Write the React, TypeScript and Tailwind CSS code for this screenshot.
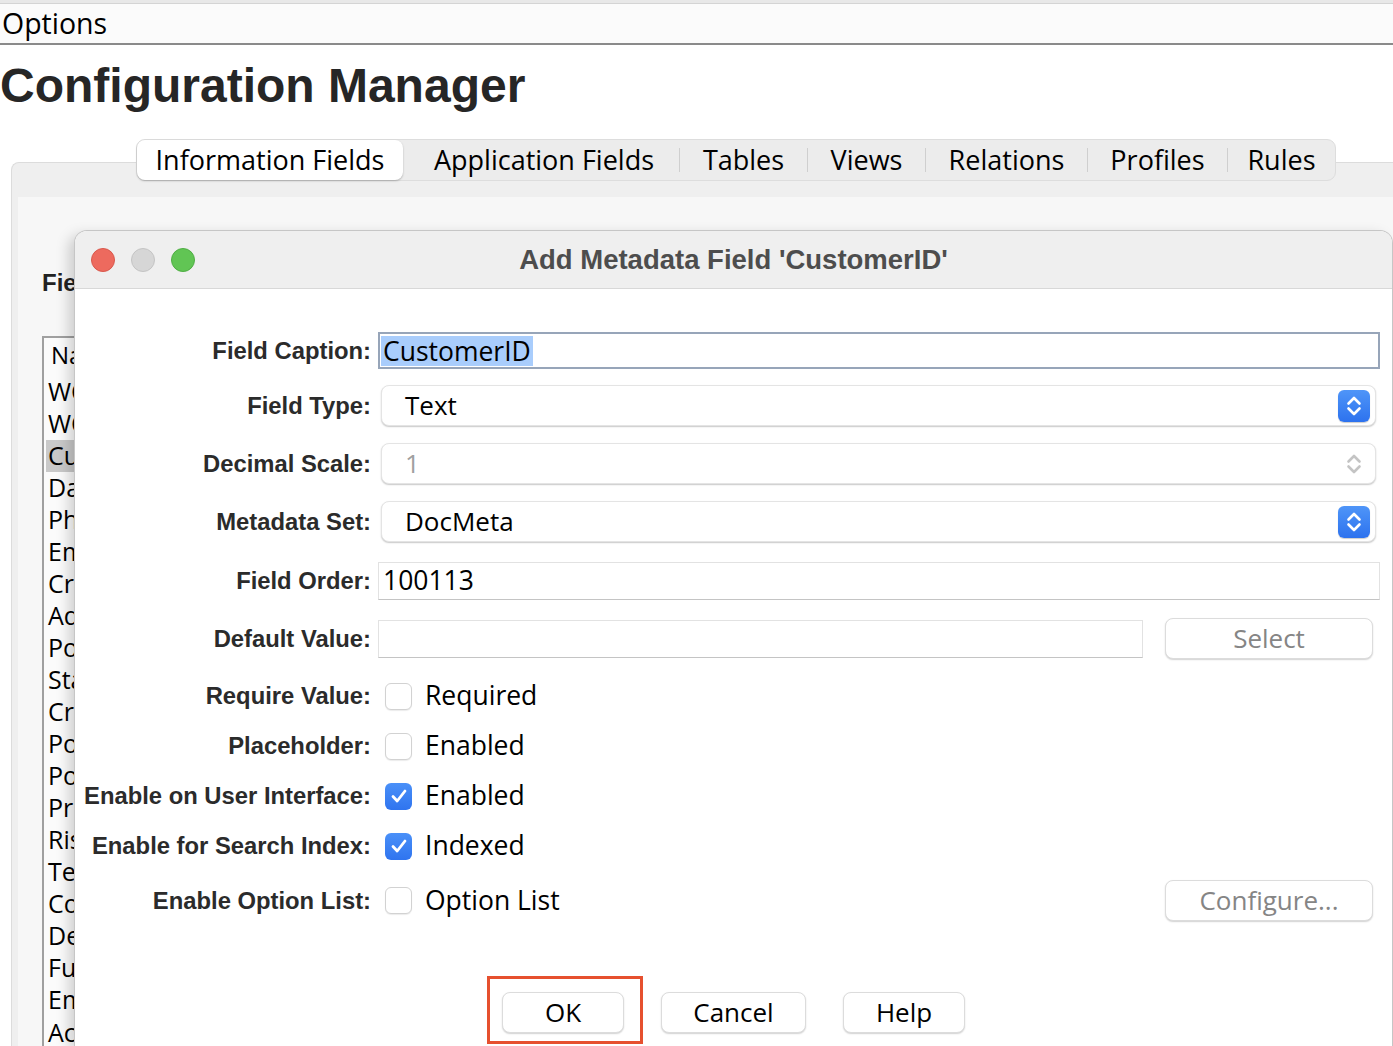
import { ReactNode } from 'react'

const ui = "font-['Open_Sans',sans-serif]"
const helv = "font-['Liberation_Sans',Arial,sans-serif]"

const tabs = [
  { name: 'Information Fields', w: 'w-[266px]' },
  { name: 'Application Fields', w: 'w-[276px]' },
  { name: 'Tables', w: 'w-[127px]' },
  { name: 'Views', w: 'w-[117px]' },
  { name: 'Relations', w: 'w-[161px]' },
  { name: 'Profiles', w: 'w-[139px]' },
  { name: 'Rules', w: 'w-[107px]' },
]

// only the left edge of the list peeks out from behind the dialog
const listItems = ['WC', 'WC', 'Cu', 'Da', 'Ph', 'Em', 'Cr', 'Ad', 'Po', 'Sta', 'Cr', 'Po', 'Po', 'Pr', 'Ris', 'Te', 'Co', 'De', 'Fu', 'Em']

function Stepper({ disabled }: { disabled?: boolean }) {
  if (disabled) {
    return (
      <svg width="32" height="32" viewBox="0 0 32 32" className="mr-[5px]">
        <path d="M10.5 13.5 16 8l5.5 5.5M10.5 18.5 16 24l5.5-5.5" fill="none" stroke="#c4c4c4" strokeWidth="2.6" strokeLinecap="round" strokeLinejoin="round" />
      </svg>
    )
  }
  return (
    <div className="mr-[5px] flex h-[32px] w-[32px] items-center justify-center rounded-[6px] bg-gradient-to-b from-[#4f95f8] to-[#2d72ee] shadow-[0_1px_1px_rgba(0,0,0,0.2)]">
      <svg width="32" height="32" viewBox="0 0 32 32">
        <path d="M10.5 13.5 16 8l5.5 5.5M10.5 18.5 16 24l5.5-5.5" fill="none" stroke="#fff" strokeWidth="2.6" strokeLinecap="round" strokeLinejoin="round" />
      </svg>
    </div>
  )
}

function Select({ value, disabled }: { value: string; disabled?: boolean }) {
  return (
    <div className="ml-[3px] mr-[4px] flex h-full flex-1 items-center justify-between rounded-[8px] border border-[#e4e4e4] bg-white shadow-[0_1px_1.5px_rgba(0,0,0,0.22)]">
      <span className={`${ui} pl-[23px] text-[26px] ${disabled ? 'text-[#a0a0a0]' : 'text-black'}`}>{value}</span>
      <Stepper disabled={disabled} />
    </div>
  )
}

function Checkbox({ checked, label }: { checked?: boolean; label: string }) {
  return (
    <div className="ml-[7px] flex items-center gap-[13px]">
      {checked ? (
        <div className="flex h-[27px] w-[27px] items-center justify-center rounded-[6px] bg-gradient-to-b from-[#4a90f8] to-[#2f74ef]">
          <svg width="20" height="20" viewBox="0 0 20 20">
            <path d="M4 10.5 8.2 15 16 5" fill="none" stroke="#fff" strokeWidth="2.8" strokeLinecap="round" strokeLinejoin="round" />
          </svg>
        </div>
      ) : (
        <div className="h-[27px] w-[27px] rounded-[6px] border border-[#d2d2d2] bg-white shadow-[0_1px_1px_rgba(0,0,0,0.08)]" />
      )}
      <span className={`${ui} text-[26.5px] text-black`}>{label}</span>
    </div>
  )
}

function Row({ label, className, children }: { label: string; className: string; children: ReactNode }) {
  return (
    <div className={`flex items-center ${className}`}>
      <div className={`${helv} w-[296px] shrink-0 text-right text-[23.8px] font-bold text-[#2b2b2b]`}>{label}</div>
      <div className="flex h-full flex-1 items-center pl-[7px] pr-[12px]">{children}</div>
    </div>
  )
}

function MacButton({ children, muted, className = '' }: { children: ReactNode; muted?: boolean; className?: string }) {
  return (
    <div
      className={`${ui} relative flex h-[41px] items-center justify-center rounded-[8px] border border-[#dcdcdc] bg-white text-[26px] shadow-[0_1px_1.5px_rgba(0,0,0,0.18)] ${muted ? 'text-[#858585]' : 'text-black'} ${className}`}
    >
      {children}
    </div>
  )
}

export default function App() {
  return (
    <div className="relative h-[1046px] w-[1393px] overflow-hidden bg-white">
      <div className="h-[4px] border-b border-[#d4d4d4] bg-[#e8e8e8]" />
      <div className={`${ui} flex h-[41px] items-center border-b-2 border-[#8a8a8a] bg-[#fbfbfb] pl-[2px] text-[28.5px] leading-none text-black`}>
        Options
      </div>
      <h1 className={`${helv} mt-[17px] text-[48px] font-bold leading-[48px] text-[#262626]`}>Configuration Manager</h1>

      <div className="relative z-10 ml-[136px] mt-[29px] flex h-[42px] w-fit items-center rounded-[9px] border border-[#dddddd] bg-[#ececec]">
        {tabs.map((t, i) => (
          <div key={t.name} className="flex items-center">
            {i > 1 && <div className="h-[24px] w-px bg-[#cfcfcf]" />}
            <div
              className={`${ui} flex h-[40px] items-center justify-center text-[27px] text-black ${t.w} ${
                i === 0 ? 'rounded-[8px] bg-white text-[#1a1a1a] shadow-[0_1px_2px_rgba(0,0,0,0.25)]' : ''
              } ${i === 1 ? 'pl-[6px]' : ''}`}
            >
              {t.name}
            </div>
          </div>
        ))}
      </div>

      <div className="-mt-[19px] ml-[11px] h-[900px] rounded-tl-[8px] border-l border-t border-[#dcdcdc] bg-[#efefef] pl-[6px] pt-[34px]">
        <div className="h-full bg-[#f7f7f7] pl-[24px] pt-[72px]">
          <div className={`${helv} text-[24px] font-bold leading-[28px] text-[#222]`}>Fie</div>
          <div className="mt-[39px] h-[800px] w-[34px] overflow-hidden border-l-2 border-t-2 border-[#a0a0a0] bg-[#fbfbfb]">
            <div className={`${ui} flex h-[33px] items-center pl-[7px] text-[24px]`}>Na</div>
            <div className="pt-[5px]">
              {listItems.map((n, i) => (
                <div
                  key={i}
                  className={`${ui} ml-[2px] flex h-[32px] items-center pl-[2px] text-[25px] text-black ${i === 2 ? 'bg-[#c9c9c9]' : ''}`}
                >
                  {n}
                </div>
              ))}
              <div className={`${ui} ml-[2px] pl-[2px] text-[25px] leading-[32px] text-black`}>Ac</div>
            </div>
          </div>
        </div>
      </div>

      <div className="absolute bottom-0 left-[75px] right-px top-[231px] overflow-hidden rounded-t-[12px] bg-white shadow-[0_0_0_1px_#c6c6c6,-6px_4px_14px_rgba(0,0,0,0.18)]">
        <div className="grid h-[58px] grid-cols-[1fr_auto_1fr] items-center border-b border-[#d8d8d8] bg-[#efefef]">
          <div className="flex gap-[16px] pl-[16px]">
            <div className="h-[24px] w-[24px] rounded-full border border-[#d9584c] bg-[#ed6a5e]" />
            <div className="h-[24px] w-[24px] rounded-full border border-[#c4c4c4] bg-[#d6d6d6]" />
            <div className="h-[24px] w-[24px] rounded-full border border-[#4fae44] bg-[#61c554]" />
          </div>
          <div className={`${helv} text-[27.5px] font-bold text-[#4d4d4d]`}>Add Metadata Field 'CustomerID'</div>
          <div />
        </div>

        <div className="flex flex-col">
          <Row label="Field Caption:" className="mt-[43px] h-[37px]">
            <div className="flex h-full flex-1 items-center border-2 border-[#97a5b9] bg-white pl-px">
              <span className={`${ui} bg-[#a9cdfc] px-[2px] text-[26.5px] leading-[30px] text-black`}>CustomerID</span>
            </div>
          </Row>
          <Row label="Field Type:" className="mt-[16px] h-[41px]">
            <Select value="Text" />
          </Row>
          <Row label="Decimal Scale:" className="mt-[17px] h-[41px]">
            <Select value="1" disabled />
          </Row>
          <Row label="Metadata Set:" className="mt-[17px] h-[41px]">
            <Select value="DocMeta" />
          </Row>
          <Row label="Field Order:" className="mt-[20px] h-[38px]">
            <div className="flex h-full flex-1 items-center border border-[#e2e2e2] border-b-[#c4c4c4] bg-white pl-[4px]">
              <span className={`${ui} text-[26.5px] text-black`}>100113</span>
            </div>
          </Row>
          <Row label="Default Value:" className="mt-[18px] h-[41px]">
            <div className="h-[38px] w-[765px] border border-[#e2e2e2] border-b-[#c4c4c4] bg-white" />
            <MacButton muted className="ml-[22px] w-[208px]">Select</MacButton>
          </Row>
          <Row label="Require Value:" className="mt-[17px] h-[40px]">
            <Checkbox label="Required" />
          </Row>
          <Row label="Placeholder:" className="mt-[10px] h-[40px]">
            <Checkbox label="Enabled" />
          </Row>
          <Row label="Enable on User Interface:" className="mt-[10px] h-[40px]">
            <Checkbox checked label="Enabled" />
          </Row>
          <Row label="Enable for Search Index:" className="mt-[10px] h-[40px]">
            <Checkbox checked label="Indexed" />
          </Row>
          <Row label="Enable Option List:" className="mt-[14px] h-[41px]">
            <div className="mr-[7px] flex flex-1 items-center justify-between">
              <Checkbox label="Option List" />
              <MacButton muted className="w-[208px]">Configure...</MacButton>
            </div>
          </Row>

          <div className="mt-[71px] flex justify-center gap-[37px]">
            <MacButton className="w-[122px]">
              OK
              <div className="absolute -bottom-[12px] -left-[16px] -right-[20px] -top-[17px] border-[3px] border-[#e6502f]" />
            </MacButton>
            <MacButton className="w-[145px]">Cancel</MacButton>
            <MacButton className="w-[122px]">Help</MacButton>
          </div>
        </div>
      </div>
    </div>
  )
}
